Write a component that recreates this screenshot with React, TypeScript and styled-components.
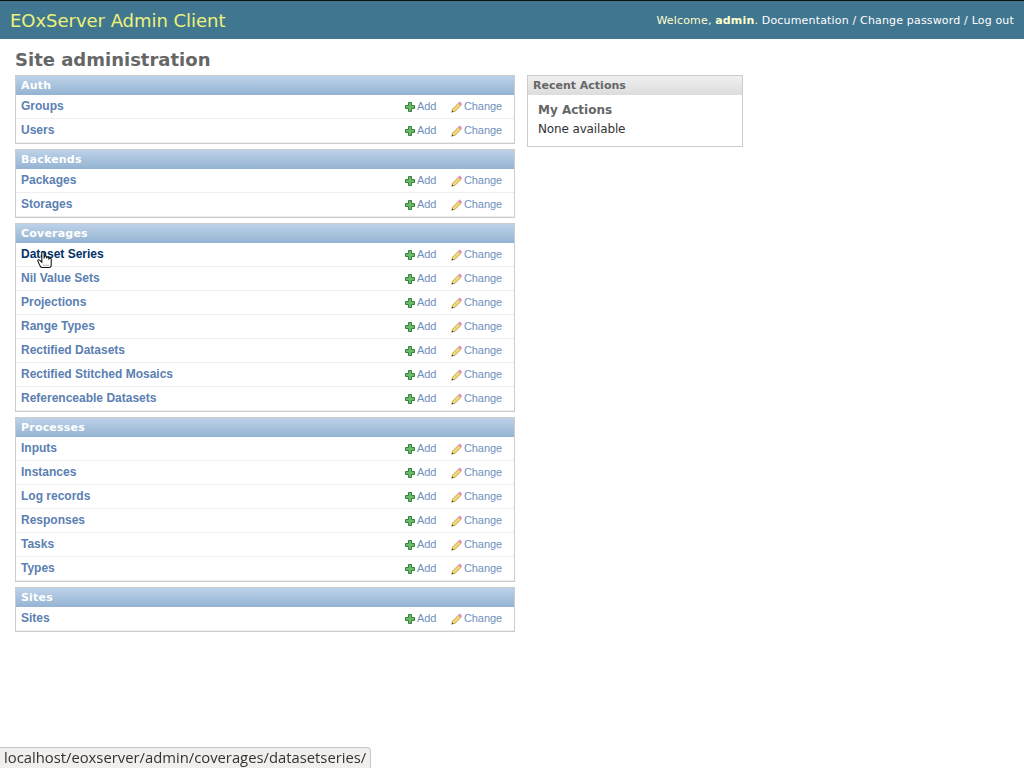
import React from 'react';
import styled, { createGlobalStyle } from 'styled-components';

const GlobalStyle = createGlobalStyle`
  html, body {
    margin: 0;
    padding: 0;
    background: #fff;
    color: #333;
    font-family: "DejaVu Sans", sans-serif;
    font-size: 12px;
  }
`;

const Header = styled.header`
  display: flex;
  align-items: center;
  justify-content: space-between;
  height: 38px;
  padding: 0 10px;
  border-top: 1px solid #111;
  background: #417690;
`;

const Branding = styled.div`
  font-size: 18px;
  letter-spacing: -0.03px;
  color: #ecf27a;
`;

const UserTools = styled.div`
  color: #ffc;
  font-size: 11px;
  letter-spacing: 0.17px;
  strong {
    font-weight: bold;
  }
`;

const ToolLink = styled.a`
  color: #fff;
  text-decoration: none;
`;

const Title = styled.h1`
  margin: 0;
  padding: 10px 15px 5px;
  height: 21px;
  line-height: 21px;
  font-size: 18px;
  font-weight: bold;
  color: #666;
`;

const Columns = styled.div`
  display: flex;
  align-items: flex-start;
  gap: 12px;
  padding: 0 15px;
`;

const Modules = styled.div`
  display: flex;
  flex-direction: column;
  gap: 5px;
  width: 500px;
`;

const Module = styled.section`
  border: 1px solid #ccc;
  box-sizing: border-box;
`;

const Caption = styled.div`
  height: 19px;
  line-height: 19px;
  padding: 0 5px;
  font-size: 11px;
  font-weight: bold;
  letter-spacing: 0.2px;
  color: #fff;
  background: linear-gradient(#bdd2e8, #94b3d2);
`;

const Row = styled.div`
  position: relative;
  display: flex;
  align-items: center;
  height: 24px;
  box-sizing: border-box;
  padding: 0 12px 2px 5px;
  border-bottom: 1px solid #eee;
`;

const Name = styled.a<{ $hover?: boolean }>`
  flex: 1;
  font-family: "Liberation Sans", Arial, sans-serif;
  font-size: 12px;
  font-weight: bold;
  color: ${(p) => (p.$hover ? '#036' : '#5b80b2')};
  text-decoration: none;
`;

const Action = styled.a<{ $width: number }>`
  display: flex;
  align-items: center;
  gap: 2px;
  width: ${(p) => p.$width}px;
  font-family: "Liberation Sans", Arial, sans-serif;
  font-size: 11px;
  letter-spacing: -0.1px;
  color: #6f90bd;
  text-decoration: none;
`;

const ActionIcon = styled.svg`
  flex: none;
  margin-top: 2px;
`;

const HandCursor = styled.svg`
  position: absolute;
  left: 21px;
  top: 8px;
`;

const Recent = styled.aside`
  width: 216px;
  height: 72px;
  box-sizing: border-box;
  border: 1px solid #ccc;
`;

const RecentCaption = styled.div`
  height: 19px;
  line-height: 19px;
  padding: 0 5px;
  font-size: 11px;
  font-weight: bold;
  color: #666;
  background: linear-gradient(#f0f0f0, #dcdcdc);
`;

const RecentBody = styled.div`
  padding: 8px 10px;
`;

const RecentTitle = styled.h3`
  margin: 0 0 4px;
  font-size: 12px;
  line-height: 14px;
  font-weight: bold;
  color: #666;
`;

const RecentText = styled.p`
  margin: 0;
  font-size: 12px;
  line-height: 16px;
  letter-spacing: -0.14px;
  color: #333;
`;

const StatusBar = styled.div`
  position: fixed;
  left: 0;
  bottom: 0;
  height: 20px;
  line-height: 18px;
  padding: 0 4px;
  border: 1px solid #c8c8c8;
  border-left: none;
  border-bottom: none;
  border-top-right-radius: 4px;
  background: #f0efed;
  color: #333;
  font-family: "Open Sans", "Noto Sans", sans-serif;
  font-size: 14.8px;
`;

const PlusIcon = () => (
  <ActionIcon width="10" height="10" viewBox="0 0 10 10">
    <path d="M3.5.5h3v3h3v3h-3v3h-3v-3h-3v-3h3z" fill="#6cb86c" stroke="#34843a" strokeWidth="1" />
  </ActionIcon>
);

const PencilIcon = () => (
  <ActionIcon width="11" height="12" viewBox="0 0 12 13">
    <path d="M.8 12.2l.9-3.4L8 2.4l2.7 2.6-6.4 6.3z" fill="#f4d774" stroke="#a88b3a" strokeWidth=".7" />
    <path d="M8 2.4L9.6.8l2.1 2.2L10.7 5z" fill="#f08fd0" stroke="#d07ab4" strokeWidth=".5" />
    <path d="M.8 12.2l.5-2 1.5 1.5z" fill="#333" />
  </ActionIcon>
);

const Hand = () => (
  <HandCursor width="17" height="18" viewBox="0 0 16 17">
    <path
      d="M4.5 1.5c.2-1.2 2-1.2 2.2 0V7l.3-1.8c.5-.8 1.8-.6 1.9.4l.1 1.3.3-.9c.5-.7 1.7-.5 1.8.4l.1 1 .3-.4c.6-.6 1.9-.2 1.9.8v5.4c0 1.4-.8 2.3-2 2.3H4.8c-.8 0-1.3-.4-1.7-1L.8 9.6c-.5-1 .9-1.9 1.7-1l2 2z"
      fill="#fff"
      stroke="#111"
      strokeWidth="1"
    />
    <path d="M6 13.5h.9M8 13.5h.9M10 13.5h.9" stroke="#555" strokeWidth="1" />
  </HandCursor>
);

const sections: { name: string; rows: string[] }[] = [
  { name: 'Auth', rows: ['Groups', 'Users'] },
  { name: 'Backends', rows: ['Packages', 'Storages'] },
  {
    name: 'Coverages',
    rows: [
      'Dataset Series',
      'Nil Value Sets',
      'Projections',
      'Range Types',
      'Rectified Datasets',
      'Rectified Stitched Mosaics',
      'Referenceable Datasets',
    ],
  },
  {
    name: 'Processes',
    rows: ['Inputs', 'Instances', 'Log records', 'Responses', 'Tasks', 'Types'],
  },
  { name: 'Sites', rows: ['Sites'] },
];

const App: React.FC = () => {
  return (
    <>
      <GlobalStyle />
      <Header>
        <Branding>EOxServer Admin Client</Branding>
        <UserTools>
          Welcome, <strong>admin</strong>. <ToolLink href="#">Documentation</ToolLink>
          <ToolLink as="span"> / </ToolLink>
          <ToolLink href="#">Change password</ToolLink>
          <ToolLink as="span"> / </ToolLink>
          <ToolLink href="#">Log out</ToolLink>
        </UserTools>
      </Header>
      <Title>Site administration</Title>
      <Columns>
        <Modules>
          {sections.map((section) => (
            <Module key={section.name}>
              <Caption>{section.name}</Caption>
              {section.rows.map((row) => (
                <Row key={row}>
                  <Name href="#" $hover={row === 'Dataset Series'}>
                    {row}
                  </Name>
                  <Action href="#" $width={46}>
                    <PlusIcon />
                    Add
                  </Action>
                  <Action href="#" $width={51}>
                    <PencilIcon />
                    Change
                  </Action>
                  {row === 'Dataset Series' && <Hand />}
                </Row>
              ))}
            </Module>
          ))}
        </Modules>
        <Recent>
          <RecentCaption>Recent Actions</RecentCaption>
          <RecentBody>
            <RecentTitle>My Actions</RecentTitle>
            <RecentText>None available</RecentText>
          </RecentBody>
        </Recent>
      </Columns>
      <StatusBar>localhost/eoxserver/admin/coverages/datasetseries/</StatusBar>
    </>
  );
};

export default App;
